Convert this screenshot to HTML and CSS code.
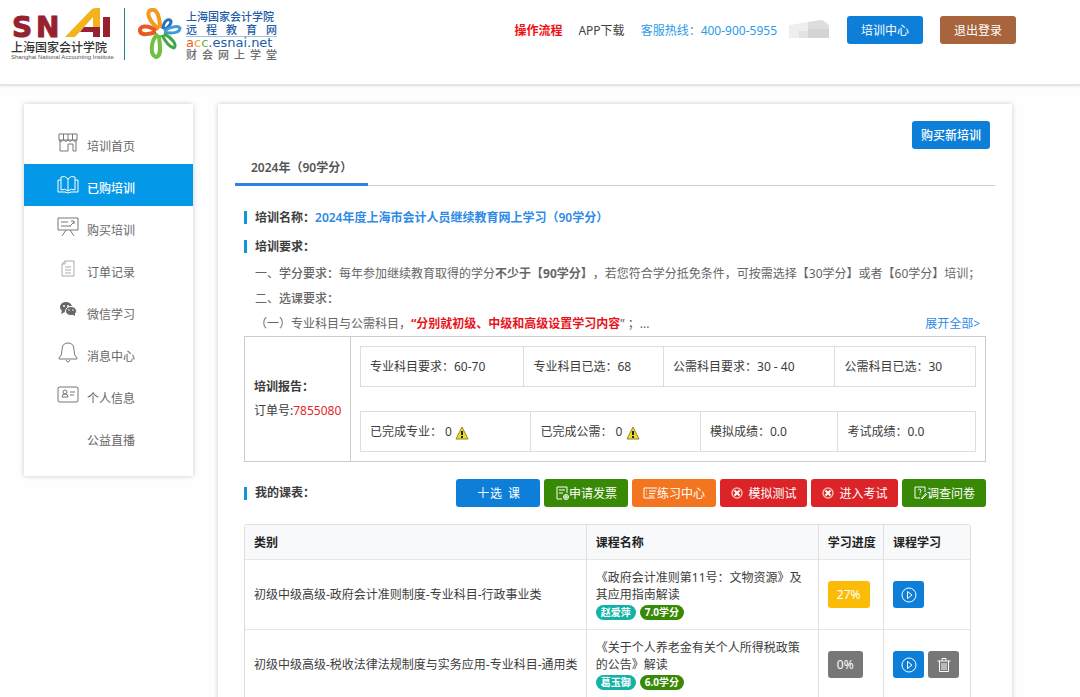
FILE: index.html
```html
<!DOCTYPE html>
<html lang="zh-CN">
<head>
<meta charset="utf-8">
<meta name="viewport" content="width=device-width, initial-scale=1">
<title>已购培训</title>
<link rel="stylesheet" href="styles.css">
</head>
<body>
<header class="header">
  <div class="brand">
    <div class="snai">
      <svg class="snai-mark" viewBox="0 0 100 36" role="img" aria-label="SNAI">
        <text class="snai-letter" x="1" y="29">S</text>
        <text class="snai-letter" x="25" y="29">N</text>
        <path fill="#f2b41c" d="M54 29 79 3Q81 0 85 0H89V29H82V9L64 29Z"/>
        <path fill="#96222f" d="M73 19H89V24H69ZM82 24H89V29H82ZM92 9H99V29H92Z"/>
      </svg>
      <span class="snai-cn">上海国家会计学院</span>
      <span class="snai-en">Shanghai National Accounting Institute</span>
    </div>
    <div class="acc">
      <svg class="flower" viewBox="0 0 44 52" fill="none" aria-hidden="true">
        <path stroke="#f39a1f" stroke-width="4" d="M21 21C10 13 8 3 13 2C20 0 22 12 22 20"/>
        <path stroke="#e95a22" stroke-width="4" d="M18 23C10 16 1 18 2 23C3 28 12 26 18 24"/>
        <path stroke="#2a72c0" stroke-width="3" d="M25 21C25 14 29 11 32 12C35 14 31 19 26 22"/>
        <path stroke="#3d9bdc" stroke-width="3" d="M26 23C32 19 40 17 42 20C42 25 33 26 26 24"/>
        <path stroke="#72bf44" stroke-width="4" d="M20 26C12 33 12 47 18 49C25 48 21 34 21 27"/>
        <path stroke="#45a548" stroke-width="3" d="M24 27C26 31 31 39 36 40C40 37 33 29 26 26"/>
      </svg>
      <div class="acc-text">
        <span class="acc-line blue">上海国家会计学院</span>
        <span class="acc-line blue spread under"><i>远</i><i>程</i><i>教</i><i>育</i><i>网</i></span>
        <span class="acc-url"><b class="c1">a</b><b class="c2">c</b><b class="c3">c</b>.esnai.net</span>
        <span class="acc-line gray spread"><i>财</i><i>会</i><i>网</i><i>上</i><i>学</i><i>堂</i></span>
      </div>
    </div>
  </div>
  <nav class="topnav">
    <a href="#" class="flow">操作流程</a>
    <a href="#" class="app">APP下载</a>
    <a href="#" class="hotline">客服热线：400-900-5955</a>
    <svg class="user" viewBox="0 0 41 20" aria-hidden="true"><path fill="#eee" d="M0 5 20 2 33 0 40 4V18H0Z"/><path fill="#ddd" d="M19 2 33 0 40 6V18H19Z"/><path fill="#d4d4d4" d="M19 9H40V18H19Z"/><path fill="#e3e3e3" d="M10 11H19V18H10Z"/></svg>
    <button class="btn btn-blue top-btn">培训中心</button>
    <button class="btn btn-brown top-btn">退出登录</button>
  </nav>
</header>

<div class="page">
  <aside class="sidebar">
    <a href="#" class="side-item"><svg viewBox="0 0 22 22"><path d="M2 2H20V8H2ZM6.500 2V8M11 2V8M15.500 2V8M3 8V19H11V12H16V19H19V8M2 8Q4 11 6.500 8Q9 11 11 8Q13 11 15.500 8Q18 11 20 8"/></svg><span>培训首页</span></a>
    <a href="#" class="side-item active"><svg viewBox="0 0 22 22"><path d="M11 5Q8 1 4 3V16Q8 14 11 17Q14 14 18 16V3Q14 1 11 5V17M4 6H1V18H8Q11 20 14 18H21V6H18"/></svg><span>已购培训</span></a>
    <a href="#" class="side-item"><svg viewBox="0 0 22 22"><path d="M1 2H21V14H1ZM4 6H11M4 10H14M13 10 17 6M14 5H17V8M9 14 5 20M13 14 17 20"/></svg><span>购买培训</span></a>
    <a href="#" class="side-item faint"><svg viewBox="0 0 22 22"><path d="M8 3H17V18H5V6ZM8 3V6H5M8 9H14M8 12H14M8 15H14"/></svg><span>订单记录</span></a>
    <a href="#" class="side-item"><svg viewBox="0 0 22 22"><g fill="#666" stroke="none"><ellipse cx="9" cy="7" rx="6" ry="5"/><path d="M5 10 4 14 8 12Z"/><ellipse cx="14" cy="11" rx="5.500" ry="4.500" stroke="#fff"/><path d="M15 14 18 16 18 13Z"/></g><g fill="#fff" stroke="none"><circle cx="7" cy="6" r="1"/><circle cx="11" cy="6" r="1"/><circle cx="12" cy="10" r=".8"/><circle cx="16" cy="10" r=".8"/></g></svg><span>微信学习</span></a>
    <a href="#" class="side-item"><svg viewBox="0 0 22 22"><path d="M11 1Q17 1 17 8Q17 14 20 16V17H2V16Q5 14 5 8Q5 1 11 1ZM9 18Q11 22 13 18"/></svg><span>消息中心</span></a>
    <a href="#" class="side-item"><svg viewBox="0 0 22 22"><path d="M2 3H20L21 4V17L20 18H2L1 17V4ZM5 13Q5 10 8 10Q11 10 11 13ZM13 8H18M13 11H17"/><circle cx="8" cy="8" r="2"/></svg><span>个人信息</span></a>
    <a href="#" class="side-item"><svg viewBox="0 0 22 22"></svg><span>公益直播</span></a>
  </aside>

  <main class="panel">
    <div class="panel-top"><button class="btn btn-blue buy-btn">购买新培训</button></div>
    <div class="tabs"><a href="#" class="tab">2024年（90学分）</a></div>

    <div class="content">
      <h2 class="row-title">培训名称：<a href="#">2024年度上海市会计人员继续教育网上学习（90学分）</a></h2>
      <h2 class="row-title">培训要求：</h2>
      <div class="rules">
        <p>一、<b class="semi">学分要求：</b>每年参加继续教育取得的学分<b>不少于【90学分】</b>，若您符合学分抵免条件，可按需选择【30学分】或者【60学分】培训；</p>
        <p>二、<b class="semi">选课要求：</b></p>
        <p class="rule-last"><span>（一）专业科目与公需科目，<b class="red">“分别就初级、中级和高级设置学习内容</b>” ；...</span><a href="#">展开全部&gt;</a></p>
      </div>

      <section class="report">
        <div class="report-label"><b>培训报告：</b><span>订单号:<em>7855080</em></span></div>
        <div class="report-body">
          <ul class="stats stats-a">
            <li>专业科目要求：60-70</li><li>专业科目已选：68</li><li>公需科目要求：30 - 40</li><li>公需科目已选：30</li>
          </ul>
          <ul class="stats stats-b">
            <li>已完成专业： 0 <svg class="warn" viewBox="0 0 14 14"><path fill="#f4de17" stroke="#8b8440" stroke-linejoin="round" d="M7 1 13 13H1Z"/><path stroke="#222" stroke-width="2" d="M7 5V9M7 10V12"/></svg></li>
            <li>已完成公需： 0 <svg class="warn" viewBox="0 0 14 14"><path fill="#f4de17" stroke="#8b8440" stroke-linejoin="round" d="M7 1 13 13H1Z"/><path stroke="#222" stroke-width="2" d="M7 5V9M7 10V12"/></svg></li>
            <li>模拟成绩：0.0</li><li>考试成绩：0.0</li>
          </ul>
        </div>
      </section>

      <div class="course-head">
        <h2 class="row-title">我的课表：</h2>
        <div class="actions">
          <button class="btn btn-blue"><svg viewBox="0 0 14 14"><path d="M7 1V12M2 6.500H13"/></svg>选&nbsp; 课</button>
          <button class="btn btn-green"><svg viewBox="0 0 14 14"><path d="M7 13H2V1H12V7M4 4H10M4 7H8"/><circle cx="11" cy="11" r="2.500"/><path d="M11 9V13M9 11H13"/></svg>申请发票</button>
          <button class="btn btn-orange"><svg viewBox="0 0 14 14"><path d="M14 2H1V12H12M6 5H13M6 7.500H12M6 10H11M3 5H4M3 8H4"/></svg>练习中心</button>
          <button class="btn btn-red"><svg viewBox="0 0 14 14"><circle cx="7" cy="7" r="5" stroke="#f9b4a8" stroke-width="1.500"/><path stroke-width="2" d="M4.500 4.500 9.500 9.500M9.500 4.500 4.500 9.500"/></svg>模拟测试</button>
          <button class="btn btn-red"><svg viewBox="0 0 14 14"><circle cx="7" cy="7" r="5" stroke="#f9b4a8" stroke-width="1.500"/><path stroke-width="2" d="M4.500 4.500 9.500 9.500M9.500 4.500 4.500 9.500"/></svg>进入考试</button>
          <button class="btn btn-green"><svg viewBox="0 0 14 14"><path d="M12 6V1H2V12H7M5 4Q7 2 8 4Q8 5 7 7M7 8V9M8 13 13 7M9 13 14 8"/></svg>调查问卷</button>
        </div>
      </div>

      <table class="courses">
        <colgroup><col class="col-type"><col class="col-name"><col class="col-rate"><col class="col-study"></colgroup>
        <thead><tr><th>类别</th><th>课程名称</th><th>学习进度</th><th>课程学习</th></tr></thead>
        <tbody>
          <tr>
            <td class="type">初级中级高级-政府会计准则制度-专业科目-行政事业类</td>
            <td>《政府会计准则第11号：文物资源》及其应用指南解读<div class="badges"><span class="badge teal">赵爱萍</span><span class="badge green">7.0学分</span></div></td>
            <td><span class="rate rate-part">27%</span></td>
            <td><div class="ops"><button class="btn btn-blue op" aria-label="播放"><svg viewBox="0 0 16 16"><circle cx="8" cy="8" r="7"/><path d="M6.500 4.500 11 8 6.500 11.500Z"/></svg></button></div></td>
          </tr>
          <tr>
            <td class="type">初级中级高级-税收法律法规制度与实务应用-专业科目-通用类</td>
            <td>《关于个人养老金有关个人所得税政策的公告》解读<div class="badges"><span class="badge teal">葛玉御</span><span class="badge green">6.0学分</span></div></td>
            <td><span class="rate rate-zero">0%</span></td>
            <td><div class="ops"><button class="btn btn-blue op" aria-label="播放"><svg viewBox="0 0 16 16"><circle cx="8" cy="8" r="7"/><path d="M6.500 4.500 11 8 6.500 11.500Z"/></svg></button><button class="btn btn-gray op" aria-label="删除"><svg viewBox="0 0 16 16"><path d="M1.500 4H14.500M6 3.500V1.500H10V3.500M3.500 4V14.500H12.500V4M6 6V13M8 6V13M10 6V13"/></svg></button></div></td>
          </tr>
        </tbody>
      </table>
    </div>
  </main>
</div>
</body>
</html>
```
FILE: styles.css
```css
* { box-sizing: border-box; }
body {
  margin: 0;
  background: #fefefe;
  color: #3c3c3c;
  font: 12px/17px "Noto Sans", "Noto Sans CJK SC", sans-serif;
  text-spacing-trim: space-all;
}
a { text-decoration: none; color: #2e8ae6; }
button { font: inherit; }
svg { flex: none; }

/* header */
.header {
  display: flex;
  justify-content: space-between;
  align-items: flex-start;
  height: 86px;
  padding: 8px 64px 0 11px;
  background: #fff;
  border-bottom: 2px solid #e4e4e4;
  box-shadow: 0 1px 2px #eee;
}
.brand { display: flex; }
.snai {
  display: flex;
  flex-direction: column;
  width: 114px;
  height: 52px;
  border-right: 1px solid #26818a;
}
.snai-mark { width: 100px; height: 36px; margin-bottom: -4px; overflow: visible; }
.snai-letter {
  font: bold 28px "DejaVu Sans", sans-serif;
  fill: #96222f;
  stroke: #96222f;
  stroke-width: 1px;
}
.snai-cn { font: 500 12px/14px "Noto Sans CJK SC", sans-serif; color: #333; white-space: nowrap; }
.snai-en { font: 6px/6px "Liberation Sans", sans-serif; color: #555; white-space: nowrap; }
.acc { display: flex; gap: 4px; margin-left: 13px; }
.flower { width: 44px; height: 52px; }
.acc-text { display: flex; flex-direction: column; width: 91px; padding-top: 2px; }
.acc-line { font: 500 11px/13px "Noto Sans CJK SC", sans-serif; }
.spread { display: flex; justify-content: space-between; }
.spread i { font-style: normal; }
.blue { color: #1d5ca8; }
.acc .gray { color: #6b6b6b; line-height: 11px; }
.under { border-bottom: 1px solid #9fc0e2; }
.acc-url { font: 13px/12px "DejaVu Sans", sans-serif; color: #1d5ca8; }
.acc-url b { font-weight: normal; }
.c1 { color: #e9622a; }
.c2 { color: #f2a52b; }
.c3 { color: #5cb947; }

.topnav { display: flex; align-items: center; padding-top: 8px; white-space: nowrap; }
.flow { color: #f00f0f; font-weight: bold; }
.app { color: #444; margin-left: 16px; }
.hotline { color: #2c9be8; margin-left: 16px; }
.user { width: 41px; height: 20px; margin-left: 12px; }

/* buttons */
.btn {
  display: inline-flex;
  align-items: center;
  justify-content: center;
  height: 28px;
  padding: 0 9px;
  border: 0;
  border-radius: 3px;
  color: #fff;
  white-space: nowrap;
  cursor: pointer;
}
.btn svg { fill: none; stroke: #fff; }
.btn-blue { background: #0d7fd9; }
.btn-brown { background: #a8643c; }
.btn-green { background: #388a06; }
.btn-orange { background: #f37520; }
.btn-red { background: #dc2428; }
.btn-gray { background: #777; }
.top-btn { width: 76px; margin-left: 17px; }

/* layout */
.page { display: flex; align-items: flex-start; gap: 25px; padding: 18px 68px 24px 24px; }
.sidebar, .panel { background: #fff; box-shadow: 0 0 5px #ccc; }
.sidebar { width: 169px; flex: none; padding: 18px 0; }
.side-item {
  display: flex;
  align-items: center;
  gap: 8px;
  height: 42px;
  padding-left: 33px;
  color: #666;
}
.side-item span { padding-top: 7px; }
.side-item svg { width: 22px; height: 22px; fill: none; stroke: #777; }
.side-item.faint svg { stroke: #aaa; }
.side-item.active { background: #0498e8; color: #fff; font-weight: 500; }
.side-item.active svg { stroke: #fff; }

.panel { flex: 1; min-width: 0; padding: 17px 17px 24px; }
.panel-top { display: flex; justify-content: flex-end; padding-right: 5px; }
.buy-btn { font-weight: 500; }
.tabs { display: flex; height: 37px; border-bottom: 1px solid #ccc; }
.tab {
  height: 37px;
  padding: 0 16px;
  border-bottom: 3px solid #2b84e2;
  color: #555;
  font-weight: 600;
  line-height: 38px;
}
.content { padding: 17px 9px 0; }
.row-title {
  display: flex;
  align-items: center;
  margin: 0;
  font-size: 12px;
  font-weight: 600;
  line-height: 29px;
}
.row-title::before { content: ""; width: 3px; height: 13px; margin-right: 8px; background: #0f95d8; }
.rules { padding: 0 6px 0 11px; color: #666; line-height: 25px; }
.rules p { margin: 0; white-space: nowrap; }
.rule-last { display: flex; justify-content: space-between; }
.semi { font-weight: 500; }
.red { color: #e8141c; }

/* report */
.report { display: flex; border: 1px solid #ccc; }
.report-label {
  display: flex;
  flex-direction: column;
  justify-content: center;
  width: 106px;
  padding-left: 9px;
  border-right: 1px solid #ccc;
  line-height: 24px;
}
.report-label b { font-weight: 600; }
.report-label em { color: #e0282c; font-style: normal; }
.report-body { flex: 1; display: grid; gap: 24px; padding: 9px; }
.stats { display: grid; margin: 0; padding: 0; list-style: none; border: 1px solid #ddd; line-height: 39px; }
.stats-a { grid-template-columns: 163fr 140fr 172fr 141fr; }
.stats-b { grid-template-columns: 170fr 170fr 138fr 138fr; }
.stats li { padding-left: 9px; white-space: nowrap; }
.stats li + li { border-left: 1px solid #ddd; }
.warn { width: 14px; height: 14px; vertical-align: middle; }

/* course list */
.course-head { display: flex; justify-content: space-between; margin-top: 17px; }
.course-head .row-title { line-height: 28px; }
.actions { display: flex; gap: 4px; }
.actions .btn { width: 84px; }
.actions .btn-red { width: 87px; gap: 4px; }
.actions svg { width: 14px; height: 14px; }
.courses {
  width: 98%;
  margin-top: 17px;
  border: 1px solid #ddd;
  border-radius: 3px;
  border-spacing: 0;
  table-layout: fixed;
}
.col-type { width: 47%; }
.col-name { width: 32%; }
.col-rate { width: 9%; }
.col-study { width: 12%; }
.courses th { height: 34px; padding: 0 0 0 9px; background: #f8f9fb; text-align: left; font-weight: 600; color: #222; white-space: nowrap; }
.courses td { height: 70px; padding: 8px 9px; border-top: 1px solid #e6e6e6; }
.courses .type { padding-right: 0; white-space: nowrap; }
.courses th + th, .courses td + td { border-left: 1px solid #e0e0e0; }
.badges { display: flex; gap: 4px; padding-top: 2px; }
.badge { padding: 0 5px; border-radius: 8px; color: #fff; font-size: 10px; font-weight: bold; line-height: 15px; }
.teal { background: #12b3a6; }
.green { background: #388a06; }
.rate { display: inline-block; padding: 0 9px; border-radius: 3px; color: #fff; line-height: 27px; }
.rate-part { background: #fbbc08; }
.rate-zero { background: #777; }
.ops { display: flex; gap: 4px; }
.op { width: 31px; height: 27px; padding: 0; }
.op svg { width: 16px; height: 16px; }
```
